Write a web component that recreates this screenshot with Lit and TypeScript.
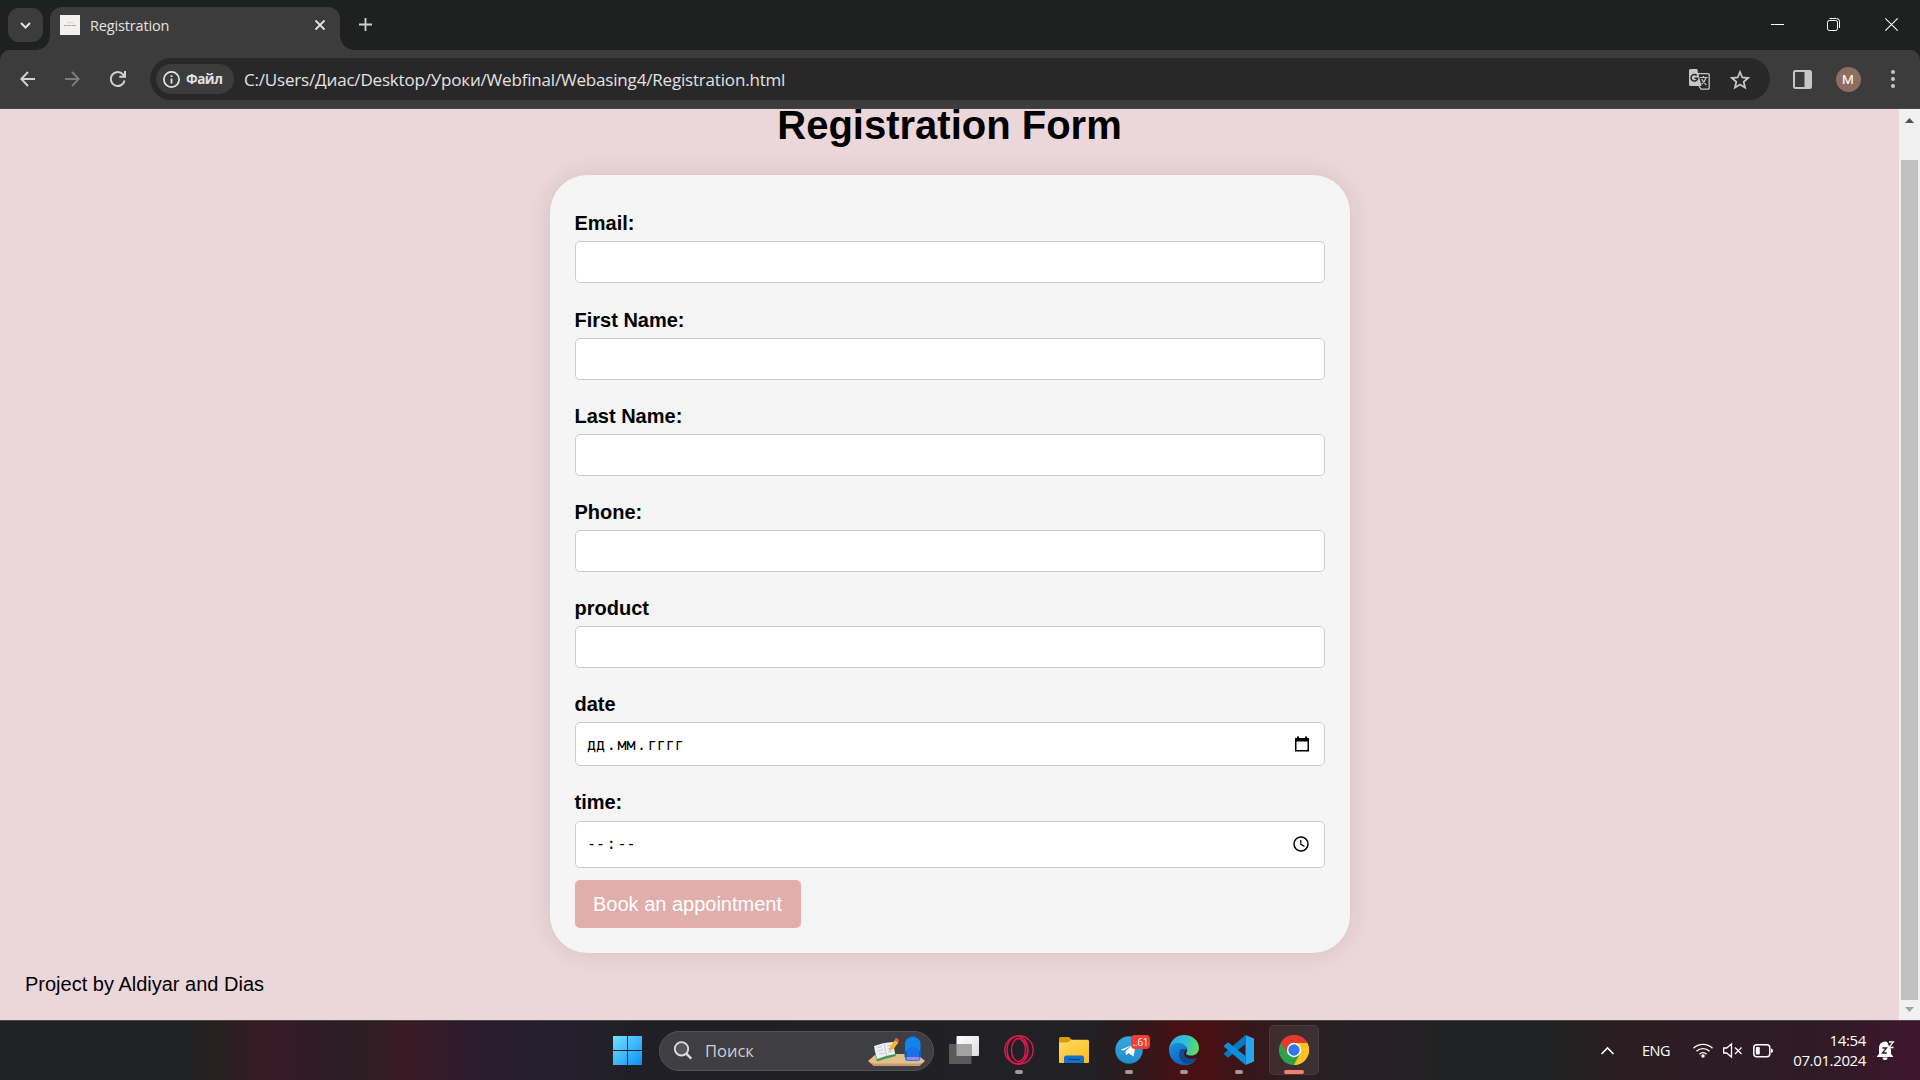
import { LitElement, html, css, svg } from "lit";
import { customElement, property } from "lit/decorators.js";

const field = (label: string, kind = "") => ({ label, kind });
const FIELDS = [
  field("Email:"),
  field("First Name:"),
  field("Last Name:"),
  field("Phone:"),
  field("product"),
  field("date", "date"),
  field("time:", "time"),
];

@customElement("browser-chrome")
class BrowserChrome extends LitElement {
  static styles = css`
    :host { display: block; background: #1f2120; font-family: "Open Sans", "Noto Sans", sans-serif; color: #e3e3e3; }
    svg { display: block; overflow: visible; }
    .strip { display: flex; height: 50px; }
    .search-tabs { width: 35px; height: 34px; margin: 8px 0 0 8px; border-radius: 11px; background: #3c3c3c; display: grid; place-items: center; }
    .tab { position: relative; display: flex; align-items: center; box-sizing: border-box; width: 290px; height: 43px; margin: 7px 0 0 7px; padding: 0 15px 7px 10px; border-radius: 12px 12px 0 0; background: #3c3c3c; }
    .tab::before, .tab::after { content: ""; position: absolute; bottom: 0; width: 14px; height: 14px; }
    .tab::before { left: -14px; background: radial-gradient(circle at 0 0, transparent 13.5px, #3c3c3c 14px); }
    .tab::after { right: -14px; background: radial-gradient(circle at 100% 0, transparent 13.5px, #3c3c3c 14px); }
    .favicon { width: 20px; height: 20px; background: #f3f1ef; }
    .title { flex: 1; margin-left: 10px; font-size: 14.5px; letter-spacing: -0.16px; line-height: 20px; padding-top: 1px; }
    .plus { margin: 18px 0 0 19px; }
    .window { display: flex; margin-left: auto; padding: 17px 22px 0 0; gap: 43px; }
    .window .close { margin-left: 2px; }
    .bar { display: flex; align-items: center; box-sizing: border-box; height: 59px; background: #3c3c3c; border-bottom: 1px solid #474747; border-radius: 10px 10px 0 0; padding: 0 25.5px 0 20px; }
    .nav { display: flex; gap: 30px; width: 130px; }
    .address { display: flex; align-items: center; flex: 1; height: 42px; border-radius: 21px; background: #282828; padding: 0 20px 0 6px; box-sizing: border-box; }
    .chip { display: flex; align-items: center; width: 78px; height: 30px; box-sizing: border-box; padding-left: 7px; gap: 6px; border-radius: 15px; background: #3c3c3c; font-size: 13.5px; font-weight: 700; letter-spacing: -0.45px; white-space: nowrap; }
    .url { margin-left: 10px; flex: 1; font-size: 17px; letter-spacing: -0.185px; line-height: 24px; white-space: nowrap; padding-top: 1px; }
    .marks { display: flex; gap: 20px; align-items: center; }
    .tools { display: flex; align-items: center; margin-left: 23px; gap: 24px; }
    .avatar { width: 25px; height: 25px; border-radius: 50%; background: #8d6e63; color: #fff; font: 13.5px/25px Roboto, sans-serif; text-align: center; }
    .more { margin-left: 6px; }
  `;
  render() {
    return html`
      <div class="strip">
        <div class="search-tabs"><svg width="11" height="7" viewBox="0 0 11 7" fill="none" stroke="#e3e3e3" stroke-width="2"><path d="M1 1l4.5 4.5L10 1" /></svg></div>
        <div class="tab">
          <div class="favicon"><svg width="20" height="20" fill="none" stroke="#c9b9a8" stroke-width="1"><path d="M4 10.5h12" stroke-dasharray="2 .5" stroke="#aaa39c" /><path d="M7 8.5l1.5-1 1.5.5 1.5-.5 1.5 1" opacity=".6" /></svg></div>
          <span class="title">Registration</span>
          <svg width="10" height="10" viewBox="0 0 10 10" stroke="#e3e3e3" stroke-width="1.8"><path d="M.5.5l9 9M9.5.5l-9 9" /></svg>
        </div>
        <svg class="plus" width="13" height="13" viewBox="0 0 13 13" stroke="#d0d0d0" stroke-width="1.8"><path d="M6.500 0v13M0 6.500h13" /></svg>
        <div class="window">
          <svg width="13" height="14" stroke="#fff"><path d="M0 7.500h13" /></svg>
          <svg width="13" height="14" fill="none" stroke="#fff"><rect x=".5" y="3.500" width="10" height="10" rx="1.800" /><path d="M2.500 1.500h7a3 3 0 0 1 3 3V11" /></svg>
          <svg class="close" width="13" height="14" stroke="#fff" stroke-width="1.100"><path d="M.3 1.300l12.400 12.400M12.700 1.300L.3 13.700" /></svg>
        </div>
      </div>
      <div class="bar">
        <div class="nav">
          <svg width="15" height="16" viewBox="0 0 15 16" fill="none" stroke="#d2d2d2" stroke-width="1.900"><path d="M15 8H1.500M8 1L1.300 8 8 15" /></svg>
          <svg width="15" height="16" viewBox="0 0 15 16" fill="none" stroke="#7c7c7c" stroke-width="1.900"><path d="M0 8h13.500M7 1l6.700 7L7 15" /></svg>
          <svg width="16" height="16" viewBox="0 0 16 16" fill="none" stroke="#d2d2d2" stroke-width="2"><path d="M14.600 9.500A7 7 0 1 1 13 3.300L15 5.300M15 0v5.800H9.300" /></svg>
        </div>
        <div class="address">
          <div class="chip">
            <svg width="17" height="17" viewBox="0 0 17 17"><circle cx="8.500" cy="8.500" r="7.600" fill="none" stroke="#e3e3e3" stroke-width="1.700" /><path d="M7.600 7.500h1.800v5H7.600zM7.600 4.300h1.800v1.800H7.600z" fill="#e3e3e3" /></svg>
            <span>Файл</span>
          </div>
          <span class="url">C:/Users/Диас/Desktop/Уроки/Webfinal/Webasing4/Registration.html</span>
          <div class="marks">
            <svg width="21" height="21" viewBox="0 0 21 21">
              <path d="M9 4.700h10a1.200 1.200 0 0 1 1.200 1.200v13a1.200 1.200 0 0 1-1.200 1.200h-7L10 17" fill="none" stroke="#c7c7c7" stroke-width="1.300" />
              <path d="M1.500 0h6.700l4.300 17H1.500A1.500 1.500 0 0 1 0 15.500v-14A1.500 1.500 0 0 1 1.500 0z" fill="#c7c7c7" />
              <path d="M7.800 6.600A3.300 3.300 0 1 0 8.600 9.300H5.500" fill="none" stroke="#282828" stroke-width="1.500" />
              <path d="M11 8.500h7.500M14.500 7v1.500M17 8.500c-.8 3-2.300 5-4.500 6.800M12.700 10c1 2.500 2.800 4.200 4.600 6" fill="none" stroke="#c7c7c7" stroke-width="1.200" />
            </svg>
            <svg width="20" height="19" viewBox="0 0 20 19" fill="none" stroke="#c7c7c7" stroke-width="1.800"><path d="M10 2l2.300 5.500 5.900.5-4.500 3.900 1.400 5.800-5.100-3.100-5.100 3.100 1.400-5.800L1.800 8l5.900-.5z" /></svg>
          </div>
        </div>
        <div class="tools">
          <svg width="19" height="19" viewBox="0 0 19 19"><rect x="1" y="1" width="17" height="17" rx="1.500" fill="none" stroke="#c7c7c7" stroke-width="2" /><path d="M11.500 1H18v17h-6.500z" fill="#c7c7c7" /></svg>
          <div class="avatar">M</div>
          <svg class="more" width="4" height="18" fill="#c7c7c7"><circle cx="2" cy="2" r="2" /><circle cx="2" cy="9" r="2" /><circle cx="2" cy="16" r="2" /></svg>
        </div>
      </div>
    `;
  }
}

@customElement("registration-page")
class RegistrationPage extends LitElement {
  static styles = css`
    :host { display: flex; height: 911px; overflow: hidden; background: #ebd7d9; font: 20px/23px "Liberation Sans", Arial, sans-serif; color: #000; }
    .page { flex: 1; display: flex; flex-direction: column; align-items: center; }
    h1 { margin: 0 0 34px; font-size: 40px; line-height: 32px; }
    .card { box-sizing: border-box; width: 800px; height: 778px; padding: 25px; border-radius: 37.5px; background: #f5f5f5; box-shadow: 0 0 25px rgba(30, 0, 10, 0.1); }
    .field { display: block; padding-top: 12.3px; margin-bottom: 12.95px; }
    .label { display: block; font-weight: 700; }
    .box { display: flex; align-items: center; justify-content: space-between; box-sizing: border-box; height: 42px; margin-top: 6px; padding: 0 14px 0 10px; background: #fff; border: 1px solid #ccc; border-radius: 5px; }
    .date { padding-top: 11.5px; }
    .date .box { height: 43.5px; margin-top: 6.8px; padding-right: 13.5px; }
    .time { margin-bottom: 12px; padding-top: 12px; }
    .time .box { height: 47px; margin-top: 7px; padding-right: 15px; }
    .parts { display: flex; font: 15px/20px "DejaVu Sans Mono", monospace; }
    .parts b { font-weight: 400; padding: 0 1.6px; }
    .date .parts { padding-top: 1px; }
    button { display: block; width: 226px; height: 48px; padding: 1px 0 0; border: 0; border-radius: 5px; background: #e1aeac; color: #fff; font: 20px "Liberation Sans", Arial, sans-serif; }
    footer { align-self: flex-start; margin: 20px 25px 0; }
    .scroll { width: 21px; display: flex; flex-direction: column; align-items: center; background: #f1f1f1; }
    .scroll svg { display: block; }
    .up { margin: 9px 0 37px; }
    .thumb { width: 17px; height: 840px; background: #c1c1c1; }
    .down { margin-top: 7px; }
  `;
  private content(kind: string) {
    if (kind === "date")
      return html`<span class="parts"><b>дд</b>.<b>мм</b>.<b>гггг</b></span>
        <svg width="16" height="16" viewBox="0 0 16 16"><path d="M1 2h14v13.500H1zM2.500 5.500V14h11V5.500z" fill-rule="evenodd" /><path d="M3 .5h2V3H3zM11 .5h2V3h-2z" /></svg>`;
    if (kind === "time")
      return html`<span class="parts"><b>--</b>:<b>--</b></span>
        <svg width="16" height="16" viewBox="0 0 16 16" fill="none" stroke="#000"><circle cx="8" cy="8" r="7" stroke-width="1.500" /><path d="M7.800 4v4.300l3.700 2.200" stroke-width="1.200" /></svg>`;
    return null;
  }
  render() {
    return html`
      <div class="page">
        <h1>Registration Form</h1>
        <div class="card">
          ${FIELDS.map((f) => html`<label class="field ${f.kind}"><span class="label">${f.label}</span><span class="box">${this.content(f.kind)}</span></label>`)}
          <button>Book an appointment</button>
        </div>
        <footer>Project by Aldiyar and Dias</footer>
      </div>
      <div class="scroll">
        <svg class="up" width="9" height="5"><path d="M0 5h9L4.500 0z" fill="#505050" /></svg>
        <div class="thumb"></div>
        <svg class="down" width="9" height="5"><path d="M0 0h9L4.500 5z" fill="#a3a3a3" /></svg>
      </div>
    `;
  }
}

const taskView = svg`<defs><linearGradient id="tv" x2="1" y2="1"><stop stop-color="#fff"/><stop offset="1" stop-color="#ddd"/></linearGradient></defs>
  <rect x="7.500" y="1" width="22.500" height="20" rx="1" fill="url(#tv)"/><rect y="9" width="22.500" height="20" rx="1" fill="#5a5a5a"/><path d="M7.500 9h15v12h-15z" fill="#a2a2a2"/>`;
const opera = svg`<g fill="none" stroke="#e0184f" stroke-width="1.400"><circle cx="15" cy="15" r="14.200"/><ellipse cx="13.500" cy="15" rx="10.500" ry="13.800"/><ellipse cx="14.500" cy="15" rx="7" ry="11.500"/><path d="M17 5c5 1.200 6.500 6.500 6.500 10S22 23.800 17 25"/></g>`;
const explorer = svg`<path d="M0 3.500a1.500 1.500 0 0 1 1.500-1.500H10l3 3-3 4H0z" fill="#e09a08"/><path d="M0 7.500h9L12 4.800h16.500A1.500 1.500 0 0 1 30 6.300V27a1 1 0 0 1-1 1H1a1 1 0 0 1-1-1z" fill="url(#ex)"/><path d="M5 28v-5a2.500 2.500 0 0 1 2.500-2.500h15A2.500 2.500 0 0 1 25 23v5z" fill="#0f70c8"/><path d="M9 24.500h12" stroke="#06418a" stroke-width="1.200"/>
  <defs><linearGradient id="ex" x2=".7" y2="1"><stop stop-color="#ffdb66"/><stop offset="1" stop-color="#fcbd21"/></linearGradient></defs>`;
const telegram = svg`<defs><linearGradient id="tg" x2="0" y2="1"><stop stop-color="#36a9e0"/><stop offset="1" stop-color="#1f8ccb"/></linearGradient></defs><circle cx="15" cy="15" r="13.700" fill="url(#tg)"/><path d="M6.500 14.800L22 8.500l-2.500 13-5-3.500-2.500 2.300-.5-4.300 7-6-9 5.500z" fill="#fff"/>`;
const edge = svg`<defs><linearGradient id="e1" x1="0" y1=".3" x2="1" y2=".5"><stop stop-color="#2aa9e8"/><stop offset=".55" stop-color="#2fc3cf"/><stop offset="1" stop-color="#62dd5c"/></linearGradient><linearGradient id="e2" x2=".6" y2="1"><stop stop-color="#1c93df"/><stop offset="1" stop-color="#0b61b8"/></linearGradient></defs>
  <path d="M0 14C1 6 7 0 15 0c9 0 15 6 15 13 0 5-4 7.500-7.500 7.500-4 0-6-1.200-5.300-2.500C20 14 17 9.500 11 9.500 6 9.500 2 12 0 16z" fill="url(#e1)"/>
  <path d="M0 15c1-5 6-8 11-7 4 .5 7 3.500 7 7-6-2-9 3-6 8 3 4 9 5 14 3-4 4-8 4.500-12 4C6 29.500 0 23 0 15z" fill="url(#e2)"/>
  <path d="M11.500 14.500c-3 5-1 12 5.500 14 5 1 9-2 11-6-4 2.200-9 1.800-12-1.500-1.500-2-1-4.500 1-5.500-1-1.500-3.500-2.200-5.500-1z" fill="#114a8b"/>`;
const vscode = svg`<path d="M21.500 0L30 3.500v23L21.500 30z" fill="#26a5f1"/><path d="M21.500 0v9L4 22.700l-3.600-3a1 1 0 0 1 0-1.600z" fill="#0879bd"/><path d="M21.500 30v-9L4 7.300.4 10.300a1 1 0 0 0 0 1.600z" fill="#0c8fd8"/>`;
const chrome = svg`<path d="M15 15L2 7.500A15 15 0 0 1 28 7.500z" fill="#e33b2e"/><path d="M15 15h-.1L28 7.500A15 15 0 0 1 15 30z" fill="#fcc31e"/><path d="M15 15L2 7.500A15 15 0 0 0 15 30l6.500-11.500z" fill="#2da14c"/><path d="M15 8h13.300A15 15 0 0 1 15 30l6.200-11.500z" fill="#fcc31e"/><path d="M2 7.500L8.600 18.500 15 8h13.300A15 15 0 0 0 2 7.500z" fill="#e33b2e"/><circle cx="15" cy="15" r="7.200" fill="#fff"/><circle cx="15" cy="15" r="5.700" fill="#2f78e6"/>`;

const APPS = [
  { icon: taskView, state: "" },
  { icon: opera, state: "open" },
  { icon: explorer, state: "" },
  { icon: telegram, state: "open", badge: "..61" },
  { icon: edge, state: "open" },
  { icon: vscode, state: "open" },
  { icon: chrome, state: "active" },
];

@customElement("task-app")
class TaskApp extends LitElement {
  @property({ attribute: false }) icon: unknown;
  @property() state = "";
  @property() badge = "";
  static styles = css`
    :host { display: grid; place-items: center; width: 55px; height: 58px; margin-bottom: 1px; }
    .tile { position: relative; display: grid; place-items: center; width: 50px; height: 50px; box-sizing: border-box; border-radius: 5px; }
    .tile.active { background: rgba(255, 255, 255, 0.08); box-shadow: inset 0 0 0 1px rgba(255, 255, 255, 0.06); }
    .badge { position: absolute; left: 27px; top: 10px; width: 19px; height: 14px; border-radius: 4px; background: #f23c34; color: #fff; font: 10px/14px "Open Sans", sans-serif; letter-spacing: -0.3px; text-align: center; }
    .mark { position: absolute; bottom: 1px; left: 21px; width: 8px; height: 4px; border-radius: 2px; background: #a19a9c; }
    .active .mark { left: 15px; width: 20px; background: #f5806a; }
    svg { display: block; overflow: visible; }
  `;
  render() {
    return html`<div class="tile ${this.state}">
      <svg width="30" height="30" viewBox="0 0 30 30">${this.icon}</svg>
      ${this.badge ? html`<span class="badge">${this.badge}</span>` : null}
      ${this.state ? html`<span class="mark"></span>` : null}
    </div>`;
  }
}

@customElement("task-bar")
class TaskBar extends LitElement {
  static styles = css`
    :host { display: flex; align-items: center; box-sizing: border-box; height: 60px; border-top: 1px solid #4b484a; color: #fff; font-family: "Open Sans", "Noto Sans", sans-serif;
      background: linear-gradient(90deg, #202122 0, #202122 190px, #292021 220px, #381a25 265px, #301c27 320px, #2c1f24 360px, #3a1a24 405px, #2b1c2f 480px, #252030 545px, #201f25 640px, #212024 1090px, #2c1a1d 1130px, #481013 1180px, #481013 1210px, #361719 1250px, #2b1f21 1310px, #272125 1350px, #272125 1390px, #212223 1440px, #212223 1550px, #281e20 1600px, #2d1c23 1680px, #2f1b26 1820px, #40152e 1920px); }
    svg { display: block; overflow: visible; }
    .start { margin-left: 613px; }
    .search { display: flex; align-items: center; box-sizing: border-box; width: 275px; height: 40px; margin: 0 2.5px 0 17px; padding: 0 8px 0 14px; border: 1px solid #535256; border-radius: 20px; background: #3f3e42; font-size: 16.5px; color: #d0cfd1; }
    .search span { flex: 1; margin-left: 13px; letter-spacing: 0; }
    .tray { display: flex; align-items: center; margin-left: auto; padding-right: 26px; }
    .lang { margin: 0 22px 0 28px; width: 29px; font-size: 14.5px; letter-spacing: -0.5px; }
    .status { display: flex; align-items: center; gap: 10px; }
    .clock { width: 93px; font-size: 15px; letter-spacing: -0.37px; line-height: 20px; text-align: right; margin-right: 11px; padding-bottom: 1px; }
  `;
  render() {
    return html`
      <svg class="start" width="29" height="29" viewBox="0 0 29 29"><defs><linearGradient id="w" gradientUnits="userSpaceOnUse" x2="29" y2="29"><stop stop-color="#72e2ff" /><stop offset="1" stop-color="#0a90f5" /></linearGradient></defs><path d="M0 0h14v14H0zM15 0h14v14H15zM0 15h14v14H0zM15 15h14v14H15z" fill="url(#w)" /></svg>
      <div class="search">
        <svg width="18" height="19" viewBox="0 0 18 19" fill="none" stroke="#dcdcdc" stroke-width="1.900"><circle cx="7.500" cy="7.800" r="6.700" fill="#55555a" /><path d="M12.300 12.700l5 5" stroke-width="2.400" /></svg>
        <span>Поиск</span>
        <svg width="57" height="32" viewBox="0 0 57 32">
          <path d="M0 26l8-7h41l8 7-6 5H6z" fill="#e6bd8c" /><path d="M1 27l5 4h45l5-4-5 1.500H6z" fill="#c99b6b" />
          <path d="M6 14l11-3 8-2 3 12-11 3-8 2.500z" fill="#3f9d52" /><path d="M6 11l10-3 9-1 2 12-9 2-9 3z" fill="#eeeff4" /><path d="M16 8l2.500 13M9 13l5-1.500M10 16l5-1.500M19 11l4-1M20 14l4-1M11 19l5-1M20 17l5-1" stroke="#b7bccb" stroke-width=".8" />
          <path d="M21 16l1-4.500L27 5l3.500 2.500-5 6.500z" fill="#f5b52c" /><path d="M26.500 5L28 2.500 31 5l-1 2.500z" fill="#ef5b4d" />
          <path d="M42 4V2.500a3 3 0 0 1 5 0V4" fill="none" stroke="#105abf" stroke-width="1.500" /><path d="M37 9c0-4 3-7 8-7s7.500 3 7.500 7v14a3 3 0 0 1-3 3H40a3 3 0 0 1-3-3z" fill="#1284ee" /><path d="M36.500 16h16.500v6H36.500z" fill="#0b5bc4" /><path d="M39 16c0-3 3-4 6-4s6 1 6 4v6H39z" fill="#1a72e0" /><path d="M39 22h12v3H39z" fill="#a287f4" />
        </svg>
      </div>
      ${APPS.map((a) => html`<task-app .icon=${a.icon} .state=${a.state} .badge=${a.badge ?? ""}></task-app>`)}
      <div class="tray">
        <svg width="13" height="8" viewBox="0 0 13 8" fill="none" stroke="#fff" stroke-width="1.700"><path d="M.5 7l6-6 6 6" /></svg>
        <span class="lang">ENG</span>
        <div class="status">
          <svg width="20" height="15" viewBox="0 0 20 15" fill="none" stroke="#fff" stroke-width="1.400"><path d="M.5 5.300a13.500 13.500 0 0 1 19 0M3.500 8.300a9.200 9.200 0 0 1 13 0M6.500 11.200a5 5 0 0 1 7 0" /><circle cx="10" cy="13" r="1.700" fill="#fff" stroke="none" /></svg>
          <svg width="20" height="15" viewBox="0 0 20 15" fill="none" stroke="#fff" stroke-width="1.300"><path d="M.7 5v5h3l4.800 4V1L3.700 5zM12 4.500l6.500 6.500M18.500 4.500L12 11" /></svg>
          <svg width="20" height="14" viewBox="0 0 20 14"><rect x=".8" y=".8" width="16" height="12" rx="3" fill="none" stroke="#fff" stroke-width="1.500" /><rect x="2.800" y="3" width="4" height="7.600" rx="1" fill="#fff" /><path d="M18 4.500c1 0 2 1 2 2.300S19 9 18 9z" fill="#fff" /></svg>
        </div>
        <div class="clock">14:54<br />07.01.2024</div>
        <svg width="17" height="19" viewBox="0 0 17 19"><path d="M2 13V6.500a6 6 0 0 1 12 0V13l2 2.300v.7H0v-.7z" fill="#fff" /><path d="M5.500 16.500h5a2.500 2.500 0 0 1-5 0z" fill="#fff" /><path d="M10 .5h7v7h-4z" fill="#2f1b26" /><path d="M5.500 7h4L5.500 12h4.300" fill="none" stroke="#2f1b26" stroke-width="1.300" /><path d="M12 1h4.300L12 6.500h4.500" fill="none" stroke="#fff" stroke-width="1.300" /></svg>
      </div>
    `;
  }
}

@customElement("app-root")
class AppRoot extends LitElement {
  static styles = css`
    :host { display: block; width: 1920px; height: 1080px; overflow: hidden; }
  `;
  render() {
    return html`<browser-chrome></browser-chrome><registration-page></registration-page><task-bar></task-bar>`;
  }
}
